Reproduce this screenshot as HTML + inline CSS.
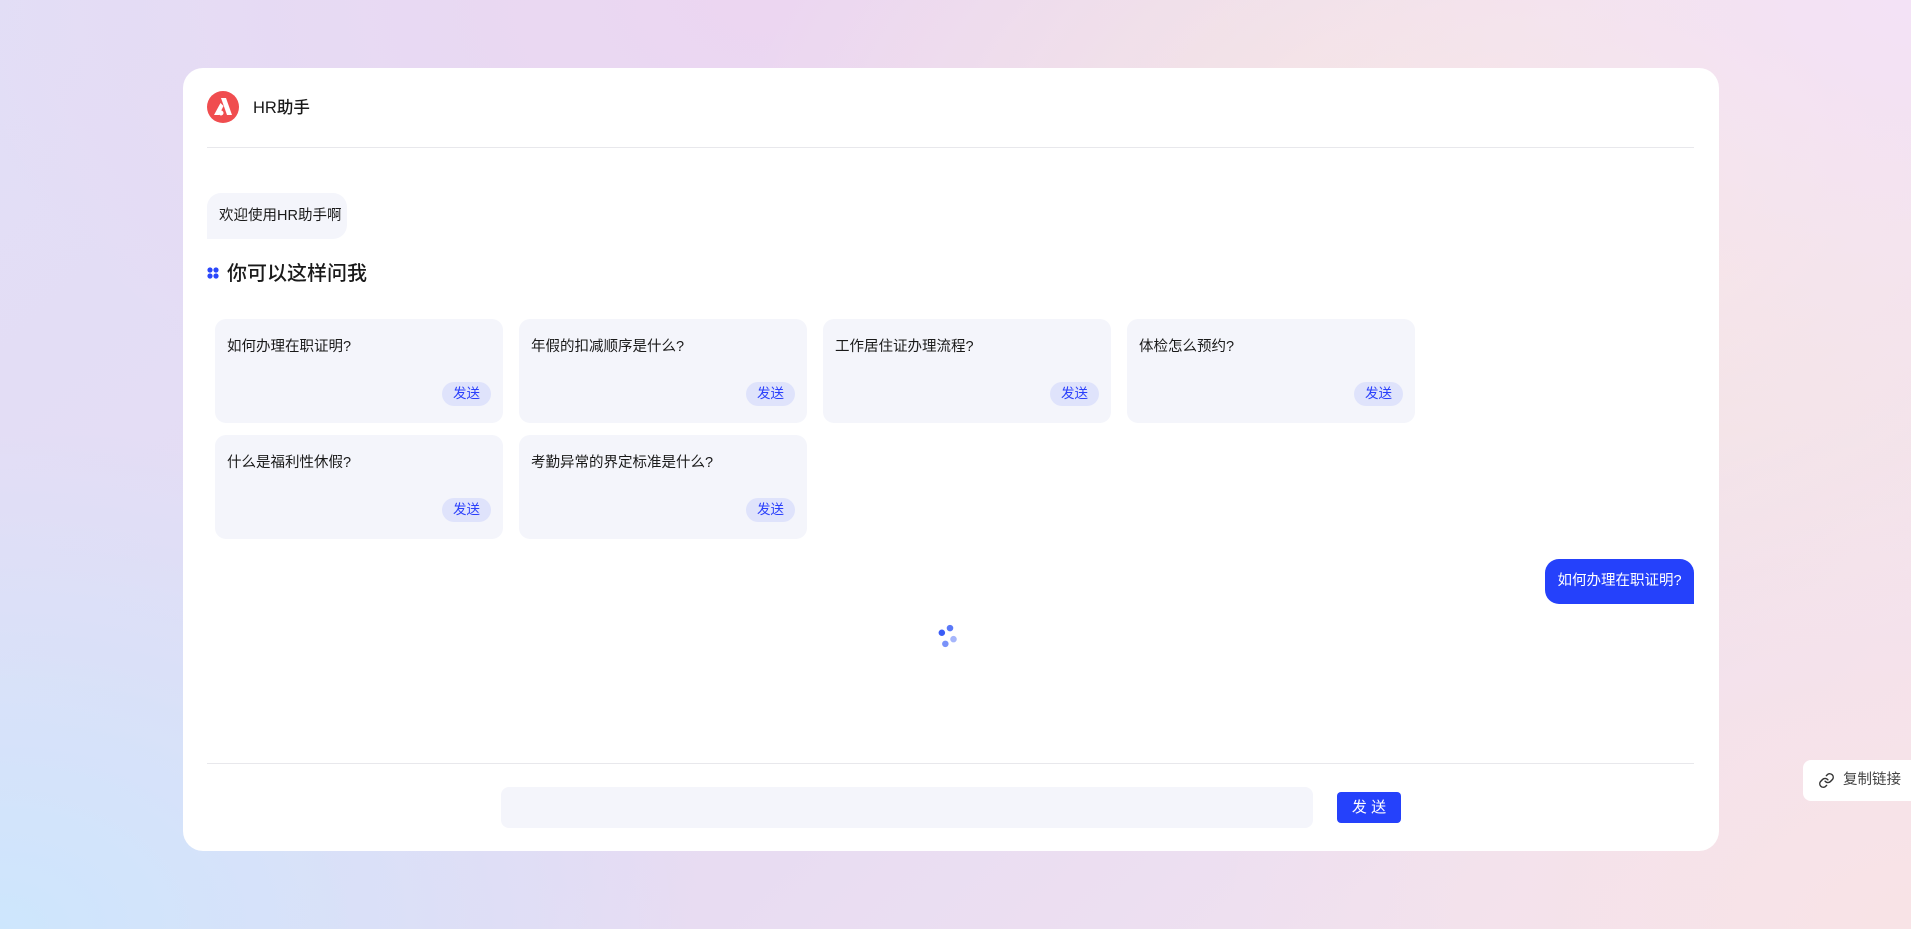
<!DOCTYPE html>
<html><head><meta charset="utf-8"><style>
*{margin:0;padding:0;box-sizing:border-box}
body{width:1911px;height:929px;overflow:hidden;font-family:"Liberation Sans","Noto Sans CJK SC",sans-serif;color:#1a1a1a;position:relative;
background:
radial-gradient(ellipse 700px 500px at 0% 100%, #cde6fd 0%, rgba(205,230,253,0) 100%),
radial-gradient(ellipse 700px 450px at 100% 0%, #f3e2f6 0%, rgba(243,226,246,0) 100%),
radial-gradient(ellipse 800px 500px at 80% 20%, #fbe9df 0%, rgba(251,233,223,0) 100%),
radial-gradient(ellipse 700px 500px at 100% 100%, #f8e3e6 0%, rgba(248,227,230,0) 100%),
radial-gradient(ellipse 800px 500px at 40% 0%, #ecd6f1 0%, rgba(236,214,241,0) 100%),
linear-gradient(135deg,#e2def6 0%,#e6dbf3 50%,#f5e4ee 100%);}
.card{position:absolute;left:183px;top:68px;width:1536px;height:783px;background:#fff;border-radius:20px}
.abs{position:absolute}
.hr{position:absolute;left:24px;width:1487px;height:1px;background:#e8e8ec}
.q{position:absolute;width:288px;height:104px;background:#f4f5fb;border-radius:11px}
.q span{position:absolute;left:12px;top:16px;font-size:14.5px;color:#1a1a1a}
.q b{position:absolute;right:12px;bottom:17px;width:49px;height:24px;border-radius:12px;background:#dfe3fb;color:#2a3ffb;font-weight:normal;font-size:13.5px;text-align:center;line-height:24px}
</style></head><body>
<div class="card">
  <svg class="abs" style="left:24px;top:23px" width="32" height="32" viewBox="0 0 32 32"><circle cx="16" cy="16" r="16" fill="#f04d4f"/><path d="M14 7 L19 7 L25 24 L20 24 Z" fill="#fff"/><path d="M13.5 12 L16.5 15 L12 24 L7 24 Z" fill="#fff"/><circle cx="14" cy="22" r="2.5" fill="#fff"/></svg>
  <div class="abs" style="left:70px;top:29px;font-size:16.5px;font-weight:500;line-height:22px">HR助手</div>
  <div class="hr" style="top:79px"></div>
  <div class="abs" style="left:24px;top:125px;width:140px;height:46px;background:#f4f5fb;border-radius:14px 14px 14px 0;font-size:14.5px;line-height:46px;padding-left:12px">欢迎使用HR助手啊</div>
  <svg class="abs" style="left:24px;top:199px" width="12" height="12" viewBox="0 0 12 12"><circle cx="3" cy="3" r="2.6" fill="#2a47fb"/><circle cx="9" cy="3" r="2.6" fill="#2a47fb"/><circle cx="3" cy="9" r="2.6" fill="#2a47fb"/><circle cx="9" cy="9" r="2.6" fill="#2a47fb"/></svg>
  <div class="abs" style="left:44px;top:193px;font-size:20px;font-weight:500;line-height:26px">你可以这样问我</div>
  <div class="q" style="left:32px;top:251px"><span>如何办理在职证明?</span><b>发送</b></div>
  <div class="q" style="left:336px;top:251px"><span>年假的扣减顺序是什么?</span><b>发送</b></div>
  <div class="q" style="left:640px;top:251px"><span>工作居住证办理流程?</span><b>发送</b></div>
  <div class="q" style="left:944px;top:251px"><span>体检怎么预约?</span><b>发送</b></div>
  <div class="q" style="left:32px;top:367px"><span>什么是福利性休假?</span><b>发送</b></div>
  <div class="q" style="left:336px;top:367px"><span>考勤异常的界定标准是什么?</span><b>发送</b></div>
  <div class="abs" style="left:1362px;top:491px;width:149px;height:45px;background:#2541fb;border-radius:14px 14px 0 14px;color:#fff;font-size:14.5px;line-height:45px;text-align:center">如何办理在职证明?</div>
  <svg class="abs" style="left:753px;top:556px" width="28" height="28" viewBox="0 0 24 24"><circle cx="5" cy="7.5" r="2.8" fill="#3a5cf7"/><circle cx="12" cy="3.5" r="2.8" fill="#5a78f8"/><circle cx="15" cy="13" r="2.8" fill="#a6b6fb"/><circle cx="8" cy="17" r="2.8" fill="#7a92f9"/></svg>
  <div class="hr" style="top:695px"></div>
  <div class="abs" style="left:318px;top:719px;width:812px;height:41px;background:#f4f5fb;border-radius:8px"></div>
  <div class="abs" style="left:1154px;top:724px;width:64px;height:31px;background:#2541fb;border-radius:4px;color:#fff;font-size:15px;line-height:31px;text-align:center">发 送</div>
</div>
<div class="abs" style="left:1803px;top:760px;width:108px;height:41px;background:#fff;border-radius:8px 0 0 8px;font-size:14.5px;color:#444;line-height:41px;padding-left:40px">复制链接
  <svg class="abs" style="left:15px;top:12px" width="17" height="17" viewBox="0 0 24 24" fill="none" stroke="#333" stroke-width="2" stroke-linecap="round"><path d="M10 13a5 5 0 0 0 7.5.5l3-3a5 5 0 0 0-7-7l-1.7 1.7"/><path d="M14 11a5 5 0 0 0-7.5-.5l-3 3a5 5 0 0 0 7 7l1.7-1.7"/></svg>
</div>
</body></html>
